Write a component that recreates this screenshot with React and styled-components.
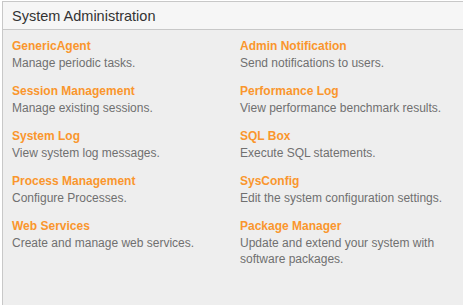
import React from 'react'
import styled, { createGlobalStyle } from 'styled-components'

const GlobalStyle = createGlobalStyle`
  body {
    margin: 0;
    background: #fff;
    font-family: "Liberation Sans", Arial, sans-serif;
  }
`

const items = [
  { title: 'GenericAgent', desc: 'Manage periodic tasks.' },
  { title: 'Admin Notification', desc: 'Send notifications to users.' },
  { title: 'Session Management', desc: 'Manage existing sessions.' },
  { title: 'Performance Log', desc: 'View performance benchmark results.' },
  { title: 'System Log', desc: 'View system log messages.' },
  { title: 'SQL Box', desc: 'Execute SQL statements.' },
  { title: 'Process Management', desc: 'Configure Processes.' },
  { title: 'SysConfig', desc: 'Edit the system configuration settings.' },
  { title: 'Web Services', desc: 'Create and manage web services.' },
  { title: 'Package Manager', desc: 'Update and extend your system with software packages.' },
]

const App = () => {
  return (
    <>
      <GlobalStyle />
      <Panel>
        <Header>System Administration</Header>
        <Content>
          {items.map((item) => (
            <Item key={item.title}>
              <Title href="#">{item.title}</Title>
              <Desc>{item.desc}</Desc>
            </Item>
          ))}
        </Content>
      </Panel>
    </>
  )
}

const Panel = styled.div`
  margin: 1px 0 0 2px;
  width: 470px;
  height: 310px;
  border-top: 1px solid #c8c8c8;
  border-left: 1px solid #c8c8c8;
  background: #eeeeee;
`

const Header = styled.h2`
  margin: 0;
  height: 27px;
  padding-left: 9px;
  display: flex;
  align-items: center;
  background: #f6f6f6;
  border-bottom: 1px solid #c8c8c8;
  font-size: 14.5px;
  font-weight: normal;
  color: #333;
`

const Content = styled.div`
  display: grid;
  grid-template-columns: 228px 220px;
  row-gap: 12px;
  padding: 8px 0 0 9px;
`

const Item = styled.div`
  display: flex;
  flex-direction: column;
  font-size: 12px;
  line-height: 16px;
`

const Title = styled.a`
  color: #fa962d;
  font-weight: bold;
  line-height: 17px;
  text-decoration: none;
`

const Desc = styled.span`
  color: #707070;
`

export default App
